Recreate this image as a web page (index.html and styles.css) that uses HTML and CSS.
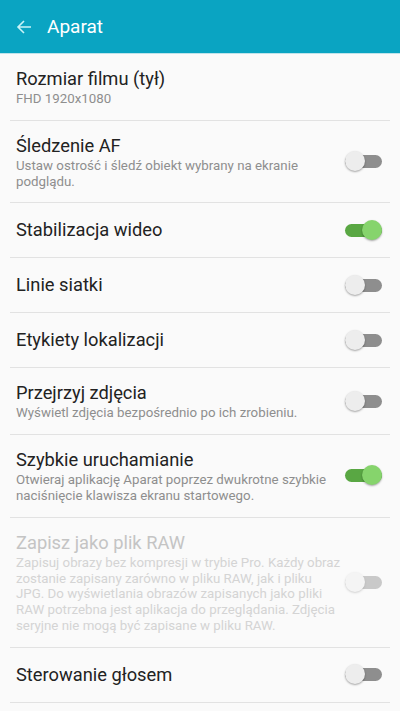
FILE: index.html
```html
<!DOCTYPE html>
<html lang="pl">
<head>
  <meta charset="UTF-8">
  <meta name="viewport" content="width=device-width, initial-scale=1.0">
  <title>Aparat</title>
  <link rel="stylesheet" href="styles.css">
</head>
<body>

<!-- pasek tytułu -->
<header class="appbar">
  <svg class="back" width="16" height="16" viewBox="0 0 16 16">
    <path d="M15 8H2M8 2L2 8l6 6" fill="none" stroke="#c9f3f7" stroke-width="1.6"/>
  </svg>
  <span class="appbar-title">Aparat</span>
</header>

<!-- lista ustawień -->
<ul class="settings">
  <li class="item">
    <div class="text">
      <div class="title">Rozmiar filmu (tył)</div>
      <div class="sub">FHD 1920x1080</div>
    </div>
  </li>
  <li class="item">
    <div class="text">
      <div class="title">Śledzenie AF</div>
      <div class="sub">Ustaw ostrość i śledź obiekt wybrany na ekranie podglądu.</div>
    </div>
    <span class="switch"></span>
  </li>
  <li class="item">
    <div class="text">
      <div class="title">Stabilizacja wideo</div>
    </div>
    <span class="switch on"></span>
  </li>
  <li class="item">
    <div class="text">
      <div class="title">Linie siatki</div>
    </div>
    <span class="switch"></span>
  </li>
  <li class="item">
    <div class="text">
      <div class="title">Etykiety lokalizacji</div>
    </div>
    <span class="switch"></span>
  </li>
  <li class="item">
    <div class="text">
      <div class="title">Przejrzyj zdjęcia</div>
      <div class="sub">Wyświetl zdjęcia bezpośrednio po ich zrobieniu.</div>
    </div>
    <span class="switch"></span>
  </li>
  <li class="item">
    <div class="text">
      <div class="title">Szybkie uruchamianie</div>
      <div class="sub">Otwieraj aplikację Aparat poprzez dwukrotne szybkie naciśnięcie klawisza ekranu startowego.</div>
    </div>
    <span class="switch on"></span>
  </li>
  <li class="item disabled">
    <div class="text">
      <div class="title">Zapisz jako plik RAW</div>
      <div class="sub">Zapisuj obrazy bez kompresji w trybie Pro. Każdy obraz zostanie zapisany zarówno w pliku RAW, jak i pliku JPG. Do wyświetlania obrazów zapisanych jako pliki RAW potrzebna jest aplikacja do przeglądania. Zdjęcia seryjne nie mogą być zapisane w pliku RAW.</div>
    </div>
    <span class="switch"></span>
  </li>
  <li class="item">
    <div class="text">
      <div class="title">Sterowanie głosem</div>
    </div>
    <span class="switch"></span>
  </li>
</ul>

</body>
</html>
```

FILE: styles.css
```css
body { margin: 0; background: #fafafa; font-family: Roboto, "Noto Sans", sans-serif; }

/* pasek tytułu */
.appbar {
  height: 54px;
  background: #0aa4c2;
  border-bottom: 1px solid #bfe3ea;
  display: flex;
  align-items: center;
  padding-left: 16px;
  box-sizing: border-box;
}
.back { margin-right: 15px; }
.appbar-title { color: #fff; font-size: 19px; }

/* lista */
.settings { list-style: none; margin: 0; padding: 0 10px; }
.item {
  display: flex;
  align-items: center;
  min-height: 55px;
  padding: 13px 0 13px 6px;
  box-sizing: border-box;
  border-bottom: 1px solid #e2e2e2;
}
.text { flex: 1; padding-right: 4px; }
.title { font-size: 18.3px; line-height: 24px; color: #222; }
.sub { font-size: 13.3px; line-height: 15.8px; color: #8e8e8e; }

.disabled .title { color: #c4c4c4; }
.disabled .sub { color: #d4d4d4; }
.disabled .switch { opacity: 0.45; }

/* przełącznik */
.switch {
  position: relative;
  flex: none;
  width: 37px;
  height: 13px;
  margin-right: 8px;
  border-radius: 7px;
  background: #8e8e8e;
}
.switch::after {
  content: "";
  position: absolute;
  left: 0;
  top: -4px;
  width: 20px;
  height: 20px;
  border-radius: 50%;
  background: #ededed;
  box-shadow: 0 1px 2px rgba(0, 0, 0, 0.35);
}
.switch.on { background: #59a743; }
.switch.on::after { left: auto; right: 0; background: #86d46c; }
```
